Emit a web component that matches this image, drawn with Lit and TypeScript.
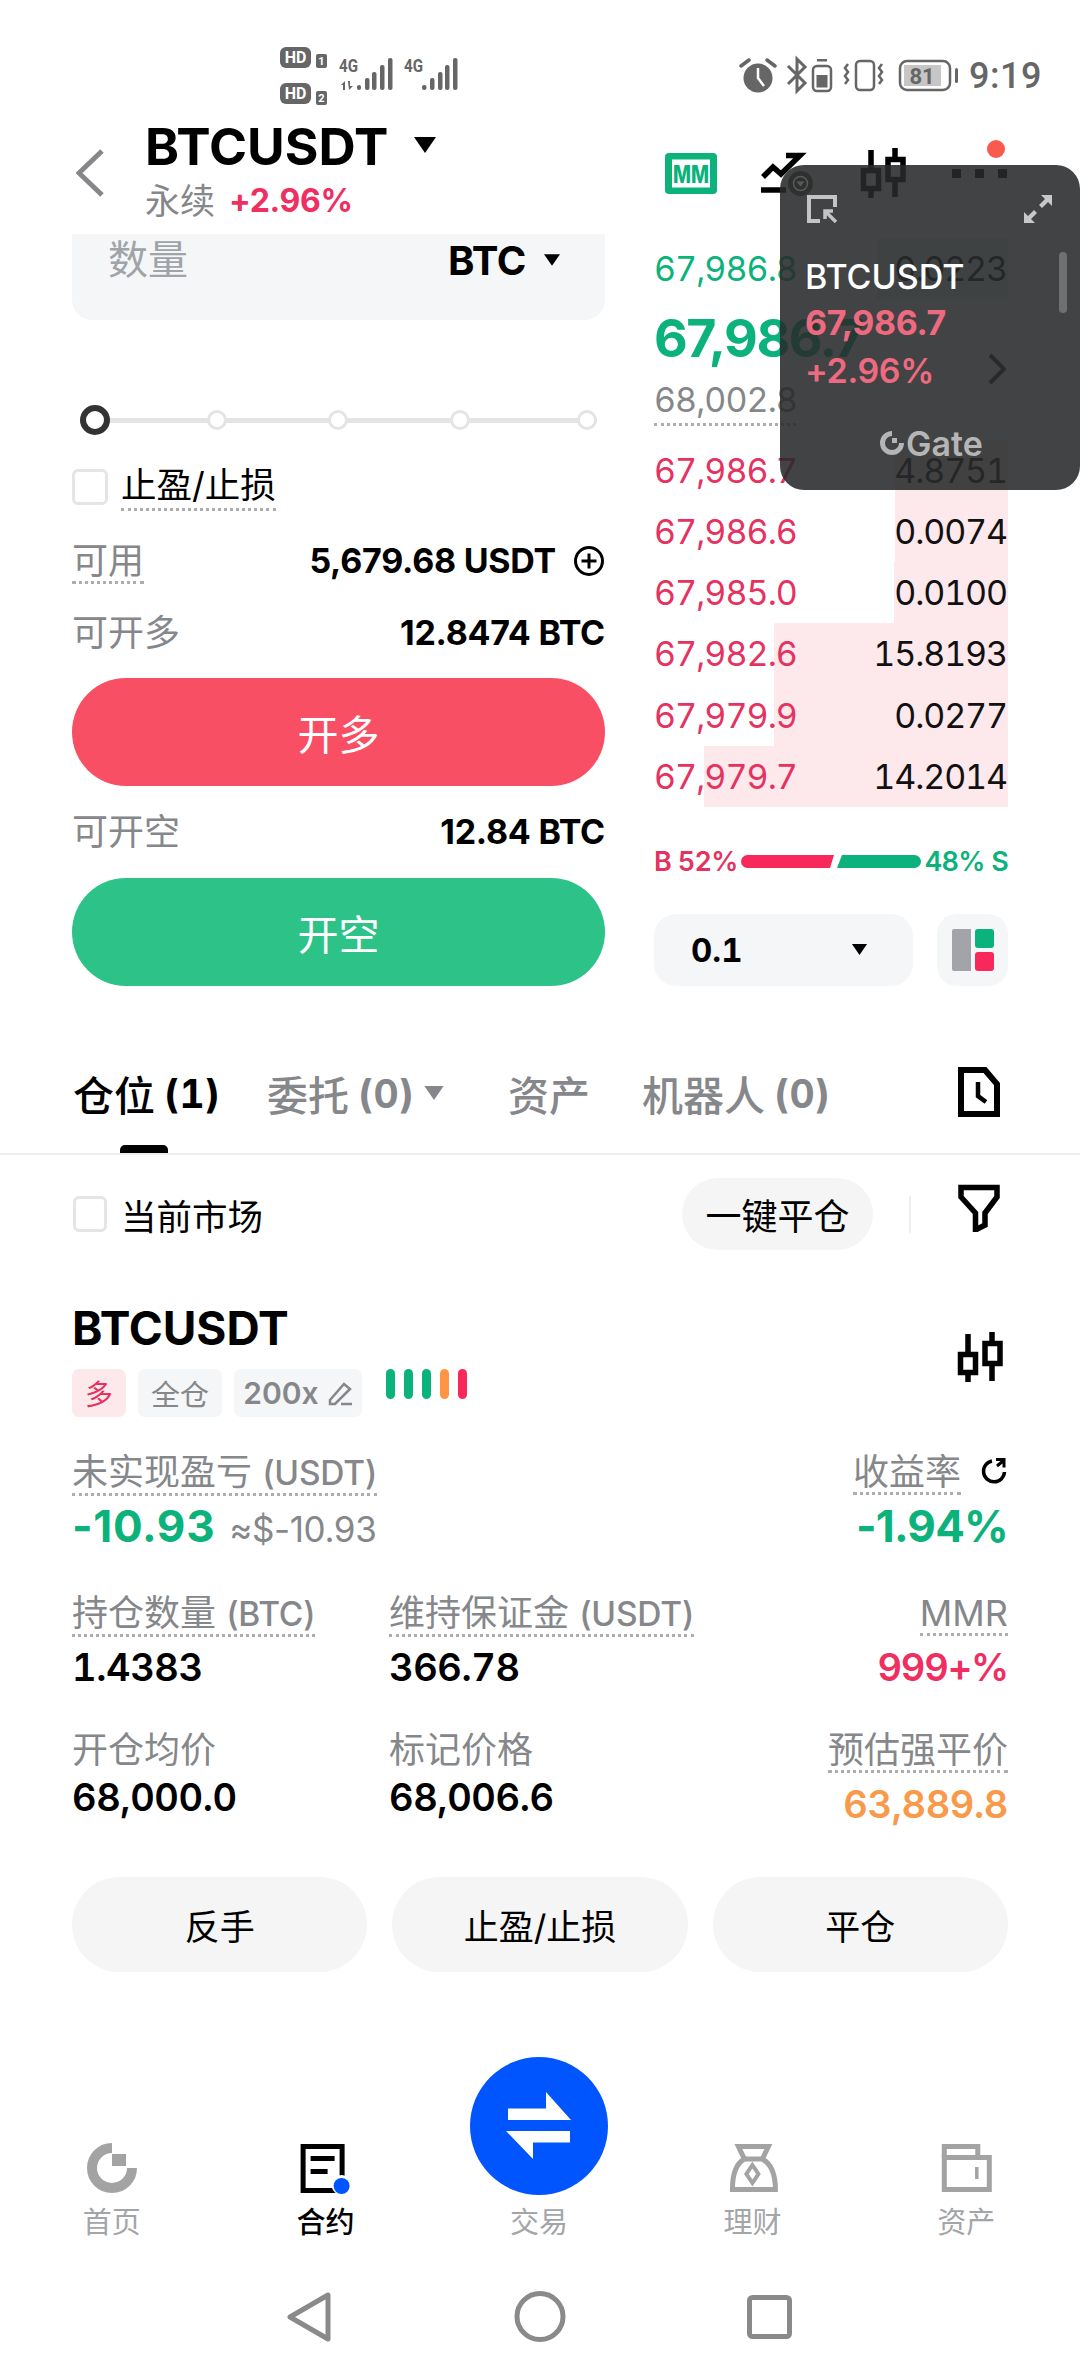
import { LitElement, html, css } from "lit";
import { customElement } from "lit/decorators.js";

const asks = [
  { p: "67,986.7", q: "4.8751", w: 113 },
  { p: "67,986.6", q: "0.0074", w: 113 },
  { p: "67,985.0", q: "0.0100", w: 114 },
  { p: "67,982.6", q: "15.8193", w: 234 },
  { p: "67,979.9", q: "0.0277", w: 234 },
  { p: "67,979.7", q: "14.2014", w: 304 },
];

const candle = (box: string, w: number, h: number) => html`<svg width=${w} height=${h} viewBox=${box} fill="none" stroke="#000" stroke-width="5.5">
  <path d="M871 150V169M871 189V198M895 148V160M895 180V197" />
  <rect x="863.500" y="170.500" width="15" height="18" />
  <rect x="888" y="159.500" width="15" height="20" />
</svg>`;

const caret = (w: number, h: number, color = "#000") => html`<svg class="caret" width=${w} height=${h} viewBox="0 0 22 16"><path d="M0 0H22L11 16Z" fill=${color} /></svg>`;

@customElement("app-root")
export class AppRoot extends LitElement {
  static styles = css`
    :host {
      display: block;
      position: relative;
      width: 1080px;
      height: 2376px;
      overflow: hidden;
      background: #fff;
      color: #000;
      font-family: Inter, "Noto Sans CJK SC", sans-serif;
    }
    svg { display: block; flex: none; }
    .status { height: 118px; }
    .status text { font-family: Roboto, sans-serif; }
    .header { display: flex; height: 116px; padding-left: 76px; padding-right: 65px; }
    .back { margin-top: 30px; margin-right: 41px; }
    .title-row { display: flex; align-items: center; height: 57px; font-size: 51.5px; line-height: 57px; font-weight: 700; }
    .title-row .caret { margin-left: 26px; margin-top: -4px; }
    .sub { display: flex; align-items: center; height: 52px; line-height: 52px; }
    .sub .perp { font-size: 35px; color: #85878a; margin-right: 14px; }
    .sub .pct { font-size: 32px; font-weight: 700; color: #ef2f5f; letter-spacing: -0.3px; }
    .tools { display: flex; margin-left: auto; padding-top: 22px; align-items: flex-start; }
    .t1 { margin-right: 44px; }
    .t2 { margin-right: 48px; }
    .t3 { margin-right: 44px; margin-top: 6px; }

    .trade { display: grid; grid-template-columns: 533px 354px; column-gap: 49px; padding: 0 72px; height: 752px; }
    .qtybox { display: flex; height: 86px; padding: 0 45px 0 36px; box-sizing: border-box; background: #f5f6f8; border-radius: 0 0 20px 20px; }
    .qtybox .name { font-size: 40px; line-height: 52px; color: #a0a3a8; }
    .qtybox .unit { display: flex; align-items: center; gap: 18px; height: 52px; margin-left: auto; font-size: 40px; font-weight: 700; letter-spacing: -0.4px; }
    .slider { display: grid; grid-template-columns: 127px 121px 122px 127px 20px; align-items: center; height: 30px; width: 517px; margin: 85px 0 0 8px; background: linear-gradient(#e3e4e6, #e3e4e6) center / 100% 5px no-repeat; }
    .knob { width: 30px; height: 30px; box-sizing: border-box; border: 6px solid #333; border-radius: 50%; background: #fff; }
    .tick { width: 20px; height: 20px; box-sizing: border-box; border: 3px solid #e3e4e6; border-radius: 50%; background: #fff; }
    .checkrow { display: flex; gap: 13px; height: 36px; margin-top: 34px; }
    .box { width: 36px; height: 36px; box-sizing: border-box; border: 3px solid #e4e5e7; border-radius: 6px; flex: none; }
    .dot { display: inline-block; align-self: flex-start; padding-bottom: 2px; border-bottom: 3px dotted #adadad; }
    .checkrow .dot { font-size: 35.5px; line-height: 33px; padding-bottom: 6px; height: 33px; }
    .kv { display: flex; justify-content: space-between; align-items: flex-start; height: 36px; font-size: 34px; line-height: 36px; }
    .kv .k { font-size: 36px; color: #85878a; }
    .kv .v { display: flex; align-items: center; gap: 17px; font-weight: 700; font-size: 34px; height: 36px; letter-spacing: -0.25px; }
    .m38 { margin-top: 38px; }
    .m36 { margin-top: 36px; }
    .m28 { margin-top: 28px; }
    .cta { display: flex; align-items: center; justify-content: center; height: 108px; border-radius: 54px; color: #fff; font-size: 41px; margin-top: 27px; }
    .cta.m28 { margin-top: 28px; }
    .cta.long { background: #f94f64; }
    .cta.short { background: #2dc287; }

    .book { padding-top: 4px; font-size: 34px; letter-spacing: -0.95px; font-variant-numeric: tabular-nums; }
    .row { position: relative; display: flex; justify-content: space-between; align-items: center; height: 61.2px; }
    .depth { position: absolute; right: 0; top: 0; bottom: 0; background: #fde8ec; }
    .depth.up { background: #e6f7f1; }
    .row span { position: relative; }
    .row .qty { color: #111; padding-right: 1px; letter-spacing: -1.1px; }
    .gr { color: #0bb27b; }
    .rd { color: #e5325f; }
    .mid { height: 138.500px; }
    .big { height: 76px; line-height: 76px; margin-top: 2px; font-size: 52px; font-weight: 700; color: #0bb27b; letter-spacing: -1.4px; font-variant-numeric: normal; }
    .mark { display: inline-block; height: 46px; line-height: 46px; width: 142px; color: #85878a; border-bottom: 3px dotted #adadad; }
    .ratio { display: flex; align-items: center; height: 30px; margin-top: 40px; font-size: 27px; font-weight: 600; letter-spacing: -0.7px; }
    .ratio .b { color: #e5325f; width: 87px; white-space: nowrap; }
    .ratio .s { color: #0bb27b; margin-left: auto; white-space: nowrap; }
    .controls { display: flex; justify-content: space-between; margin-top: 37px; }
    .sel { display: flex; align-items: center; justify-content: space-between; box-sizing: border-box; width: 259px; height: 72px; padding: 0 45px 0 37px; background: #f5f6f8; border-radius: 22px; font-size: 33px; font-weight: 700; letter-spacing: 0; }
    .lay { display: flex; align-items: center; justify-content: center; width: 71px; height: 72px; background: #f5f6f8; border-radius: 20px; }

    .tabs { display: flex; height: 167px; padding: 0 80px 0 73px; border-bottom: 2px solid #eee; }
    .tab { position: relative; display: flex; align-items: center; align-self: stretch; height: 167px; padding: 60px 0 13px; box-sizing: border-box; font-size: 41px; font-weight: 500; color: #85878a; }
    .tab b { display: inline-block; width: 53px; margin-left: 9px; text-align: center; font-size: 39px; font-weight: 700; letter-spacing: 0.2px; font-variant-numeric: tabular-nums; }
    .tab.on { color: #000; }
    .tab.on::after { content: ""; position: absolute; left: 47px; bottom: 0; width: 48px; height: 8px; border-radius: 5px 5px 0 0; background: #000; }
    .tab .caret { margin-left: 12px; }
    .g50 { margin-left: 50px; }
    .g63 { margin-left: 63px; }
    .g52 { margin-left: 52px; }
    .doc { margin-left: auto; margin-top: 81px; }
    .filterbar { display: flex; align-items: center; padding: 23px 80px 0 73px; }
    .filterbar .box { width: 34px; }
    .filterbar .lbl { font-size: 35.5px; margin-left: 14px; }
    .one { display: flex; align-items: center; justify-content: center; width: 191px; height: 72px; margin-left: auto; background: #f5f5f5; border-radius: 36px; font-size: 36px; }
    .sep { width: 2px; height: 37px; margin-left: 36px; margin-right: 47px; background: #eee; }
    .fil { margin-top: -12px; }

    .card { padding: 48px 72px 0; }
    .head { display: flex; justify-content: space-between; }
    .sym { height: 60px; line-height: 60px; font-size: 46px; font-weight: 700; letter-spacing: -0.1px; }
    .tags { display: flex; gap: 12px; margin-top: 11px; }
    .tag { display: flex; align-items: center; justify-content: center; gap: 8px; height: 48px; background: #f5f6f8; color: #85878a; border-radius: 7px; font-size: 29px; }
    .tag.a { width: 54px; background: #fde8ec; color: #e5325f; font-size: 28px; }
    .tag.c { width: 84px; }
    .tag.l { width: 128px; font-weight: 600; font-size: 30px; }
    .sig { display: flex; gap: 9px; margin-left: 12px; }
    .sig i { display: block; width: 9px; height: 30px; border-radius: 5px; }
    .head .cand { margin-top: 32px; margin-right: 5px; }
    .top { display: flex; justify-content: space-between; margin-top: 37px; }
    .stats { display: grid; grid-template-columns: 317px 1fr auto; }
    .s2 { margin-top: 47px; }
    .s3 { margin-top: 43px; }
    .cell { display: flex; flex-direction: column; align-items: flex-start; }
    .cell.r { align-items: flex-end; }
    .lab { height: 41px; display: flex; align-items: flex-start; gap: 19px; }
    .lab .t { display: block; font-size: 36px; line-height: 36px; color: #85878a; }
    .lab .t.dot { align-self: flex-start; }
    .lab em { font-style: normal; font-size: 33.5px; font-weight: 500; letter-spacing: -0.2px; }
    .ref { margin-top: 3px; }
    .val { height: 44px; line-height: 44px; margin-top: 9px; font-size: 38px; font-weight: 600; letter-spacing: -0.4px; white-space: nowrap; font-variant-numeric: tabular-nums; }
    .val.tight { margin-top: 2px; }
    .pnl { font-size: 44px; font-weight: 700; letter-spacing: -0.8px; font-variant-numeric: normal; }
    .pnl .wide { letter-spacing: 0.7px; }
    .pnl small { font-size: 35px; font-weight: 400; color: #85878a; margin-left: 14px; letter-spacing: -0.4px; }
    .or { color: #f89a4a; }
    .pink { color: #ef2f5f; letter-spacing: -1.2px; }
    .acts { display: flex; gap: 25px; margin-top: 51px; }
    .acts div { flex: 1; display: flex; align-items: center; justify-content: center; height: 95px; border-radius: 48px; background: #f5f5f5; font-size: 35px; }

    .nav { display: grid; grid-template-columns: repeat(5, 213.6px); height: 182px; margin-top: 85px; padding-left: 5px; }
    .item { display: flex; flex-direction: column; align-items: center; justify-content: flex-end; font-size: 29px; color: #a3a5a8; }
    .item.on { color: #000; font-weight: 500; }
    .item span { height: 32px; line-height: 32px; margin-top: 13px; }
    .fab { display: flex; align-items: center; justify-content: center; width: 138px; height: 138px; border-radius: 50%; background: #0055ff; margin-bottom: -1px; }
    .sys { display: flex; padding: 50px 0 0 285px; }
    .sys .s1 { margin-right: 179px; }
    .sys .s2b { margin-right: 177px; }

    .pip { position: absolute; left: 780px; top: 165px; width: 300px; height: 325px; box-sizing: border-box; padding: 30px 0 0 25px; background: rgba(40, 41, 42, 0.88); border-radius: 24px; }
    .pipbar { display: flex; justify-content: space-between; padding: 0 28px 0 2px; }
    .pip .n { margin-top: 32px; height: 44px; line-height: 44px; font-size: 34px; font-weight: 500; color: #fff; }
    .pip .p { height: 48px; line-height: 48px; font-size: 34px; font-weight: 700; color: #ee6a80; letter-spacing: -0.4px; }
    .pip .c { height: 48px; line-height: 48px; font-size: 34px; font-weight: 600; color: #ee6a80; letter-spacing: -0.4px; }
    .brand { display: flex; align-items: center; gap: 2px; height: 24px; margin: 36px 0 0 75px; font-size: 34px; font-weight: 600; color: #b5b5b5; }
    .scroll { position: absolute; left: 279px; top: 87px; width: 8px; height: 61px; border-radius: 4px; background: #6f7072; }
    .chev { position: absolute; left: 208px; top: 188px; }
    .badge { position: absolute; left: 8px; top: 6px; }
  `;

  private statusBar() {
    return html`<div class="status"><svg width="1080" height="118" viewBox="0 0 1080 118">
      <g fill="#666">
        <rect x="280" y="47" width="31" height="21" rx="6" /><rect x="280" y="83" width="31" height="21" rx="6" />
        <rect x="316" y="54" width="11" height="14" rx="2" /><rect x="316" y="91" width="11" height="14" rx="2" />
        <text x="295.500" y="63" font-size="16" font-weight="700" fill="#fff" text-anchor="middle">HD</text>
        <text x="295.500" y="99" font-size="16" font-weight="700" fill="#fff" text-anchor="middle">HD</text>
        <text x="321.500" y="65" font-size="11" font-weight="700" fill="#fff" text-anchor="middle">1</text>
        <text x="321.500" y="102" font-size="11" font-weight="700" fill="#fff" text-anchor="middle">2</text>
        <text x="339" y="72" font-size="18" font-weight="700" textLength="19" lengthAdjust="spacingAndGlyphs">4G</text>
        <text x="404" y="72" font-size="18" font-weight="700" textLength="19" lengthAdjust="spacingAndGlyphs">4G</text>
        <path d="M341 85l4-4v9h-2v-5zM348 81h2v5l3 0-4 4z" />
        <rect x="357" y="85" width="4" height="5" rx="2" /><rect x="365" y="78" width="4.500" height="12" rx="2" /><rect x="372" y="72" width="4.500" height="18" rx="2" /><rect x="380" y="65" width="4.500" height="25" rx="2" /><rect x="388" y="58" width="4.500" height="32" rx="2" />
        <rect x="422" y="85" width="4.500" height="5" rx="2" /><rect x="430" y="78" width="4.500" height="12" rx="2" /><rect x="438" y="72" width="4.500" height="18" rx="2" /><rect x="445" y="65" width="4.500" height="25" rx="2" /><rect x="453" y="58" width="4.500" height="32" rx="2" />
        <circle cx="758" cy="78" r="14.500" />
        <path d="M741 66l8-6M775 66l-8-6" stroke="#666" stroke-width="3.500" stroke-linecap="round" />
        <path d="M758 68v10l6 8" stroke="#fff" stroke-width="2.500" fill="none" />
        <path d="M788 66l17 17-8 8V59l8 8-17 17" stroke="#666" stroke-width="3" fill="none" />
        <rect x="813" y="66" width="18" height="25" rx="4" fill="none" stroke="#666" stroke-width="2.500" />
        <rect x="817" y="59" width="10" height="2.500" /><rect x="816.500" y="75" width="11" height="12.500" />
        <rect x="856" y="61" width="18" height="29" rx="4" fill="none" stroke="#666" stroke-width="2.500" />
        <path d="M848 64l-3 4 3 4-3 4 3 4-3 4M882 64l-3 4 3 4-3 4 3 4-3 4" stroke="#666" stroke-width="2.500" fill="none" />
        <rect x="900" y="61" width="50" height="29" rx="7" fill="none" stroke="#666" stroke-width="2.500" />
        <rect x="904" y="65" width="37" height="21" fill="#c6c6c6" />
        <rect x="955" y="68" width="3" height="15" rx="1.500" />
        <text x="922" y="84" font-size="22" font-weight="700" text-anchor="middle">81</text>
        <text x="969" y="88" font-size="36" font-weight="500" letter-spacing="0.5">9:19</text>
      </g>
    </svg></div>`;
  }

  private header() {
    return html`<div class="header">
      <svg class="back" width="28" height="50" viewBox="0 0 28 50" fill="none" stroke="#85878a" stroke-width="5"><path d="M26 3L3 25L26 47" /></svg>
      <div>
        <div class="title-row">BTCUSDT ${caret(22, 16)}</div>
        <div class="sub"><span class="perp">永续</span><span class="pct">+2.96%</span></div>
      </div>
      <div class="tools">
        <svg class="t1" width="52" height="60" viewBox="665 140 52 60">
          <rect x="665" y="153" width="52" height="41" rx="4" fill="#0bb27b" />
          <rect x="672" y="159.500" width="38" height="28" fill="#fff" />
          <text x="691" y="183" font-size="24" font-weight="800" fill="#0bb27b" text-anchor="middle" textLength="36" lengthAdjust="spacingAndGlyphs">MM</text>
        </svg>
        <svg class="t2" width="51" height="60" viewBox="761 140 51 60" fill="none" stroke="#000" stroke-width="5.500">
          <path d="M763 177L773 167L781 174L800 155.500H786" /><path d="M761 190H786" />
        </svg>
        <span class="t3">${candle("860 146 46 54", 46, 54)}</span>
        <svg width="65" height="40" viewBox="950 140 65 40">
          <circle cx="996" cy="149" r="9" fill="#fa5a4d" />
          <path d="M952 169h9v9h-9zM975 169h9v9h-9zM998 169h9v9h-9z" fill="#000" />
        </svg>
      </div>
    </div>`;
  }

  private formCol() {
    return html`<div>
      <div class="qtybox">
        <span class="name">数量</span>
        <span class="unit">BTC ${caret(16, 12)}</span>
      </div>
      <div class="slider"><div class="knob"></div><div class="tick"></div><div class="tick"></div><div class="tick"></div><div class="tick"></div></div>
      <div class="checkrow"><div class="box"></div><span class="dot">止盈/止损</span></div>
      <div class="kv m38">
        <span class="k dot">可用</span>
        <span class="v">5,679.68 USDT
          <svg width="32" height="32" viewBox="0 0 32 32" fill="none" stroke="#000" stroke-width="3"><circle cx="16" cy="16" r="13.500" /><path d="M16 8.500v15M8.500 16h15" /></svg>
        </span>
      </div>
      <div class="kv m36"><span class="k">可开多</span><span class="v">12.8474 BTC</span></div>
      <div class="cta long">开多</div>
      <div class="kv m28"><span class="k">可开空</span><span class="v">12.84 BTC</span></div>
      <div class="cta m28 short">开空</div>
    </div>`;
  }

  private bookCol() {
    return html`<div class="book">
      <div class="row"><i class="depth up" style="width:131px"></i><span class="gr">67,986.8</span><span class="qty">0.0223</span></div>
      <div class="mid">
        <div class="big">67,986.7</div>
        <span class="mark">68,002.8</span>
      </div>
      ${asks.map((a) => html`<div class="row"><i class="depth" style="width:${a.w}px"></i><span class="rd">${a.p}</span><span class="qty">${a.q}</span></div>`)}
      <div class="ratio">
        <span class="b">B 52%</span>
        <svg width="180" height="13" viewBox="0 0 180 13"><path d="M6.500 0H93L89 13H6.500a6.500 6.500 0 0 1 0-13Z" fill="#f9285a" /><path d="M101 0H173.500a6.500 6.500 0 0 1 0 13H96Z" fill="#0bb27b" /></svg>
        <span class="s">48% S</span>
      </div>
      <div class="controls">
        <div class="sel">0.1 ${caret(17, 11)}</div>
        <div class="lay"><svg width="42" height="42" viewBox="0 0 42 42">
          <path d="M2 0H19V42H2a2 2 0 0 1-2-2V2a2 2 0 0 1 2-2Z" fill="#a2a4a9" />
          <rect x="23" width="19" height="19" rx="3" fill="#0bb27b" /><rect x="23" y="23" width="19" height="19" rx="3" fill="#f9285a" />
        </svg></div>
      </div>
    </div>`;
  }

  private tabs() {
    return html`<div class="tabs">
      <div class="tab on">仓位<b>(1)</b></div>
      <div class="tab g50">委托<b>(0)</b>${caret(22, 14, "#85878a")}</div>
      <div class="tab g63">资产</div>
      <div class="tab g52">机器人<b>(0)</b></div>
      <svg class="doc" width="42" height="50" viewBox="958 1068 42 50" fill="none" stroke="#000" stroke-width="6">
        <path d="M961 1071H985L997 1085V1115H961Z" /><path d="M978 1083V1097L986 1103" stroke-width="4.500" />
      </svg>
    </div>
    <div class="filterbar">
      <div class="box"></div><span class="lbl">当前市场</span>
      <div class="one">一键平仓</div>
      <div class="sep"></div>
      <svg class="fil" width="42" height="48" viewBox="958 1184 42 48" fill="none" stroke="#000" stroke-width="5.500">
        <path d="M961 1187.500H997V1197L985 1213V1225L975.500 1230V1213L961 1197Z" />
      </svg>
    </div>`;
  }

  private card() {
    return html`<div class="card">
      <div class="head">
        <div>
          <div class="sym">BTCUSDT</div>
          <div class="tags">
            <div class="tag a">多</div><div class="tag c">全仓</div>
            <div class="tag l">200x
              <svg width="26" height="26" viewBox="0 0 26 26" fill="none" stroke="#85878a" stroke-width="2.500"><path d="M3 20L17 4L23 9L8 24H3ZM14 24H25" /></svg>
            </div>
            <div class="sig"><i style="background:#0bb27b"></i><i style="background:#0bb27b"></i><i style="background:#0bb27b"></i><i style="background:#ff9447"></i><i style="background:#f9285a"></i></div>
          </div>
        </div>
        <span class="cand">${candle("860 146 46 54", 46, 54)}</span>
      </div>
      <div class="top">
        <div class="cell">
          <div class="lab"><span class="t dot">未实现盈亏 <em>(USDT)</em></span></div>
          <div class="val pnl gr"><span class="wide">-10.93</span><small>≈$-10.93</small></div>
        </div>
        <div class="cell r">
          <div class="lab"><span class="t dot">收益率</span>
            <svg class="ref" width="28" height="28" viewBox="0 0 28 28" fill="none" stroke="#000" stroke-width="3.500"><path d="M12 4A10.500 10.500 0 1 0 24.500 15" /><path d="M17 9L23 4M16 2.500h8v8" stroke-width="3" /></svg>
          </div>
          <div class="val pnl gr">-1.94%</div>
        </div>
      </div>
      <div class="stats s2">
        <div class="cell"><div class="lab"><span class="t dot">持仓数量 <em>(BTC)</em></span></div><div class="val">1.4383</div></div>
        <div class="cell"><div class="lab"><span class="t dot">维持保证金 <em>(USDT)</em></span></div><div class="val">366.78</div></div>
        <div class="cell r"><div class="lab"><span class="t dot">MMR</span></div><div class="val pink">999+%</div></div>
      </div>
      <div class="stats s3">
        <div class="cell"><div class="lab"><span class="t">开仓均价</span></div><div class="val tight">68,000.0</div></div>
        <div class="cell"><div class="lab"><span class="t">标记价格</span></div><div class="val tight">68,006.6</div></div>
        <div class="cell r"><div class="lab"><span class="t dot">预估强平价</span></div><div class="val or">63,889.8</div></div>
      </div>
      <div class="acts"><div>反手</div><div>止盈/止损</div><div>平仓</div></div>
    </div>`;
  }

  private nav() {
    return html`<div class="nav">
      <div class="item">
        <svg width="54" height="52" viewBox="85 2143 54 52" fill="none" stroke="#a3a3a3" stroke-width="10">
          <path d="M112 2149A20 20 0 1 0 132 2169" /><rect x="112" y="2155" width="14" height="12" fill="#a3a3a3" stroke="none" />
        </svg>
        <span>首页</span>
      </div>
      <div class="item on">
        <svg width="54" height="52" viewBox="298.400 2143 54 52" fill="none" stroke="#000" stroke-width="5">
          <rect x="303.500" y="2147.500" width="39" height="44" />
          <path d="M311 2159.500H335M311 2172.500H328" />
          <circle cx="342" cy="2186" r="10" fill="#fff" stroke="none" /><circle cx="342" cy="2187" r="8" fill="#0055ff" stroke="none" />
        </svg>
        <span>合约</span>
      </div>
      <div class="item">
        <div class="fab"><svg width="66" height="70" viewBox="506 2093 66 70">
          <path d="M546 2094L571 2122H508V2110.500H546ZM506 2133H570V2144.500H533V2161Z" fill="#fff" />
        </svg></div>
        <span>交易</span>
      </div>
      <div class="item">
        <svg width="54" height="52" viewBox="725.600 2143 54 52" fill="none" stroke="#a3a3a3" stroke-width="5">
          <path d="M738 2147.500H768L762 2160C771 2165 775 2175 775 2190.500H732C732 2175 735 2165 744 2160Z" />
          <path d="M744 2160H762" /><path d="M752 2166L758 2175L752 2184L746 2175Z" stroke-width="4" />
        </svg>
        <span>理财</span>
      </div>
      <div class="item">
        <svg width="54" height="52" viewBox="939.200 2143 54 52" fill="none" stroke="#a3a3a3" stroke-width="5">
          <rect x="944.500" y="2158.500" width="45" height="32" /><path d="M944.500 2158.500V2147.500H978V2158.500" /><path d="M977 2168V2180" stroke-width="3.500" />
        </svg>
        <span>资产</span>
      </div>
    </div>
    <div class="sys">
      <svg class="s1" width="48" height="55" viewBox="285 2290 48 55" fill="none" stroke="#8a8a8a" stroke-width="5" stroke-linejoin="round"><path d="M328 2296V2340L290 2318Z" /></svg>
      <svg class="s2b" width="56" height="55" viewBox="512 2290 56 55" fill="none" stroke="#8a8a8a" stroke-width="5"><circle cx="540" cy="2317.500" r="23" /></svg>
      <svg width="49" height="55" viewBox="745 2290 49 55" fill="none" stroke="#8a8a8a" stroke-width="5"><rect x="749.500" y="2298.500" width="40" height="39" rx="3" /></svg>
    </div>`;
  }

  private pip() {
    return html`<div class="pip">
      <svg class="badge" width="25" height="25" viewBox="0 0 25 25"><circle cx="12.500" cy="12.500" r="12.500" fill="#2f3030" /><circle cx="12.500" cy="12.500" r="7" fill="none" stroke="#5a5a5a" stroke-width="1.500" /><path d="M8.500 10.500h8l-4 5z" fill="#5a5a5a" /></svg>
      <div class="pipbar">
        <svg width="31" height="28" viewBox="0 0 31 28" fill="none" stroke="#c4c4c4" stroke-width="4"><path d="M13 26H2V2H28V12" /><path d="M29 27L19 17M18 24V16H26" stroke-width="3.500" /></svg>
        <svg width="28" height="28" viewBox="0 0 28 28" fill="#c8c8c8"><path d="M28 0V11L24 7L18 13L15 10L21 4L17 0ZM0 28V17L4 21L10 15L13 18L7 24L11 28Z" /></svg>
      </div>
      <div class="n">BTCUSDT</div>
      <div class="p">67,986.7</div>
      <div class="c">+2.96%</div>
      <div class="brand">
        <svg width="24" height="24" viewBox="0 0 24 24" fill="none" stroke="#b5b5b5" stroke-width="5"><path d="M12 2.500A9.500 9.500 0 1 0 21.500 12" /><rect x="12" y="7" width="5" height="5" fill="#b5b5b5" stroke="none" /></svg>
        Gate
      </div>
      <div class="scroll"></div>
      <svg class="chev" width="18" height="32" viewBox="0 0 18 32" fill="none" stroke="#2a2a2a" stroke-width="4"><path d="M2 2L16 16L2 30" /></svg>
    </div>`;
  }

  render() {
    return html`
      ${this.statusBar()}
      ${this.header()}
      <div class="trade">${this.formCol()}${this.bookCol()}</div>
      ${this.tabs()}
      ${this.card()}
      ${this.nav()}
      ${this.pip()}
    `;
  }
}
